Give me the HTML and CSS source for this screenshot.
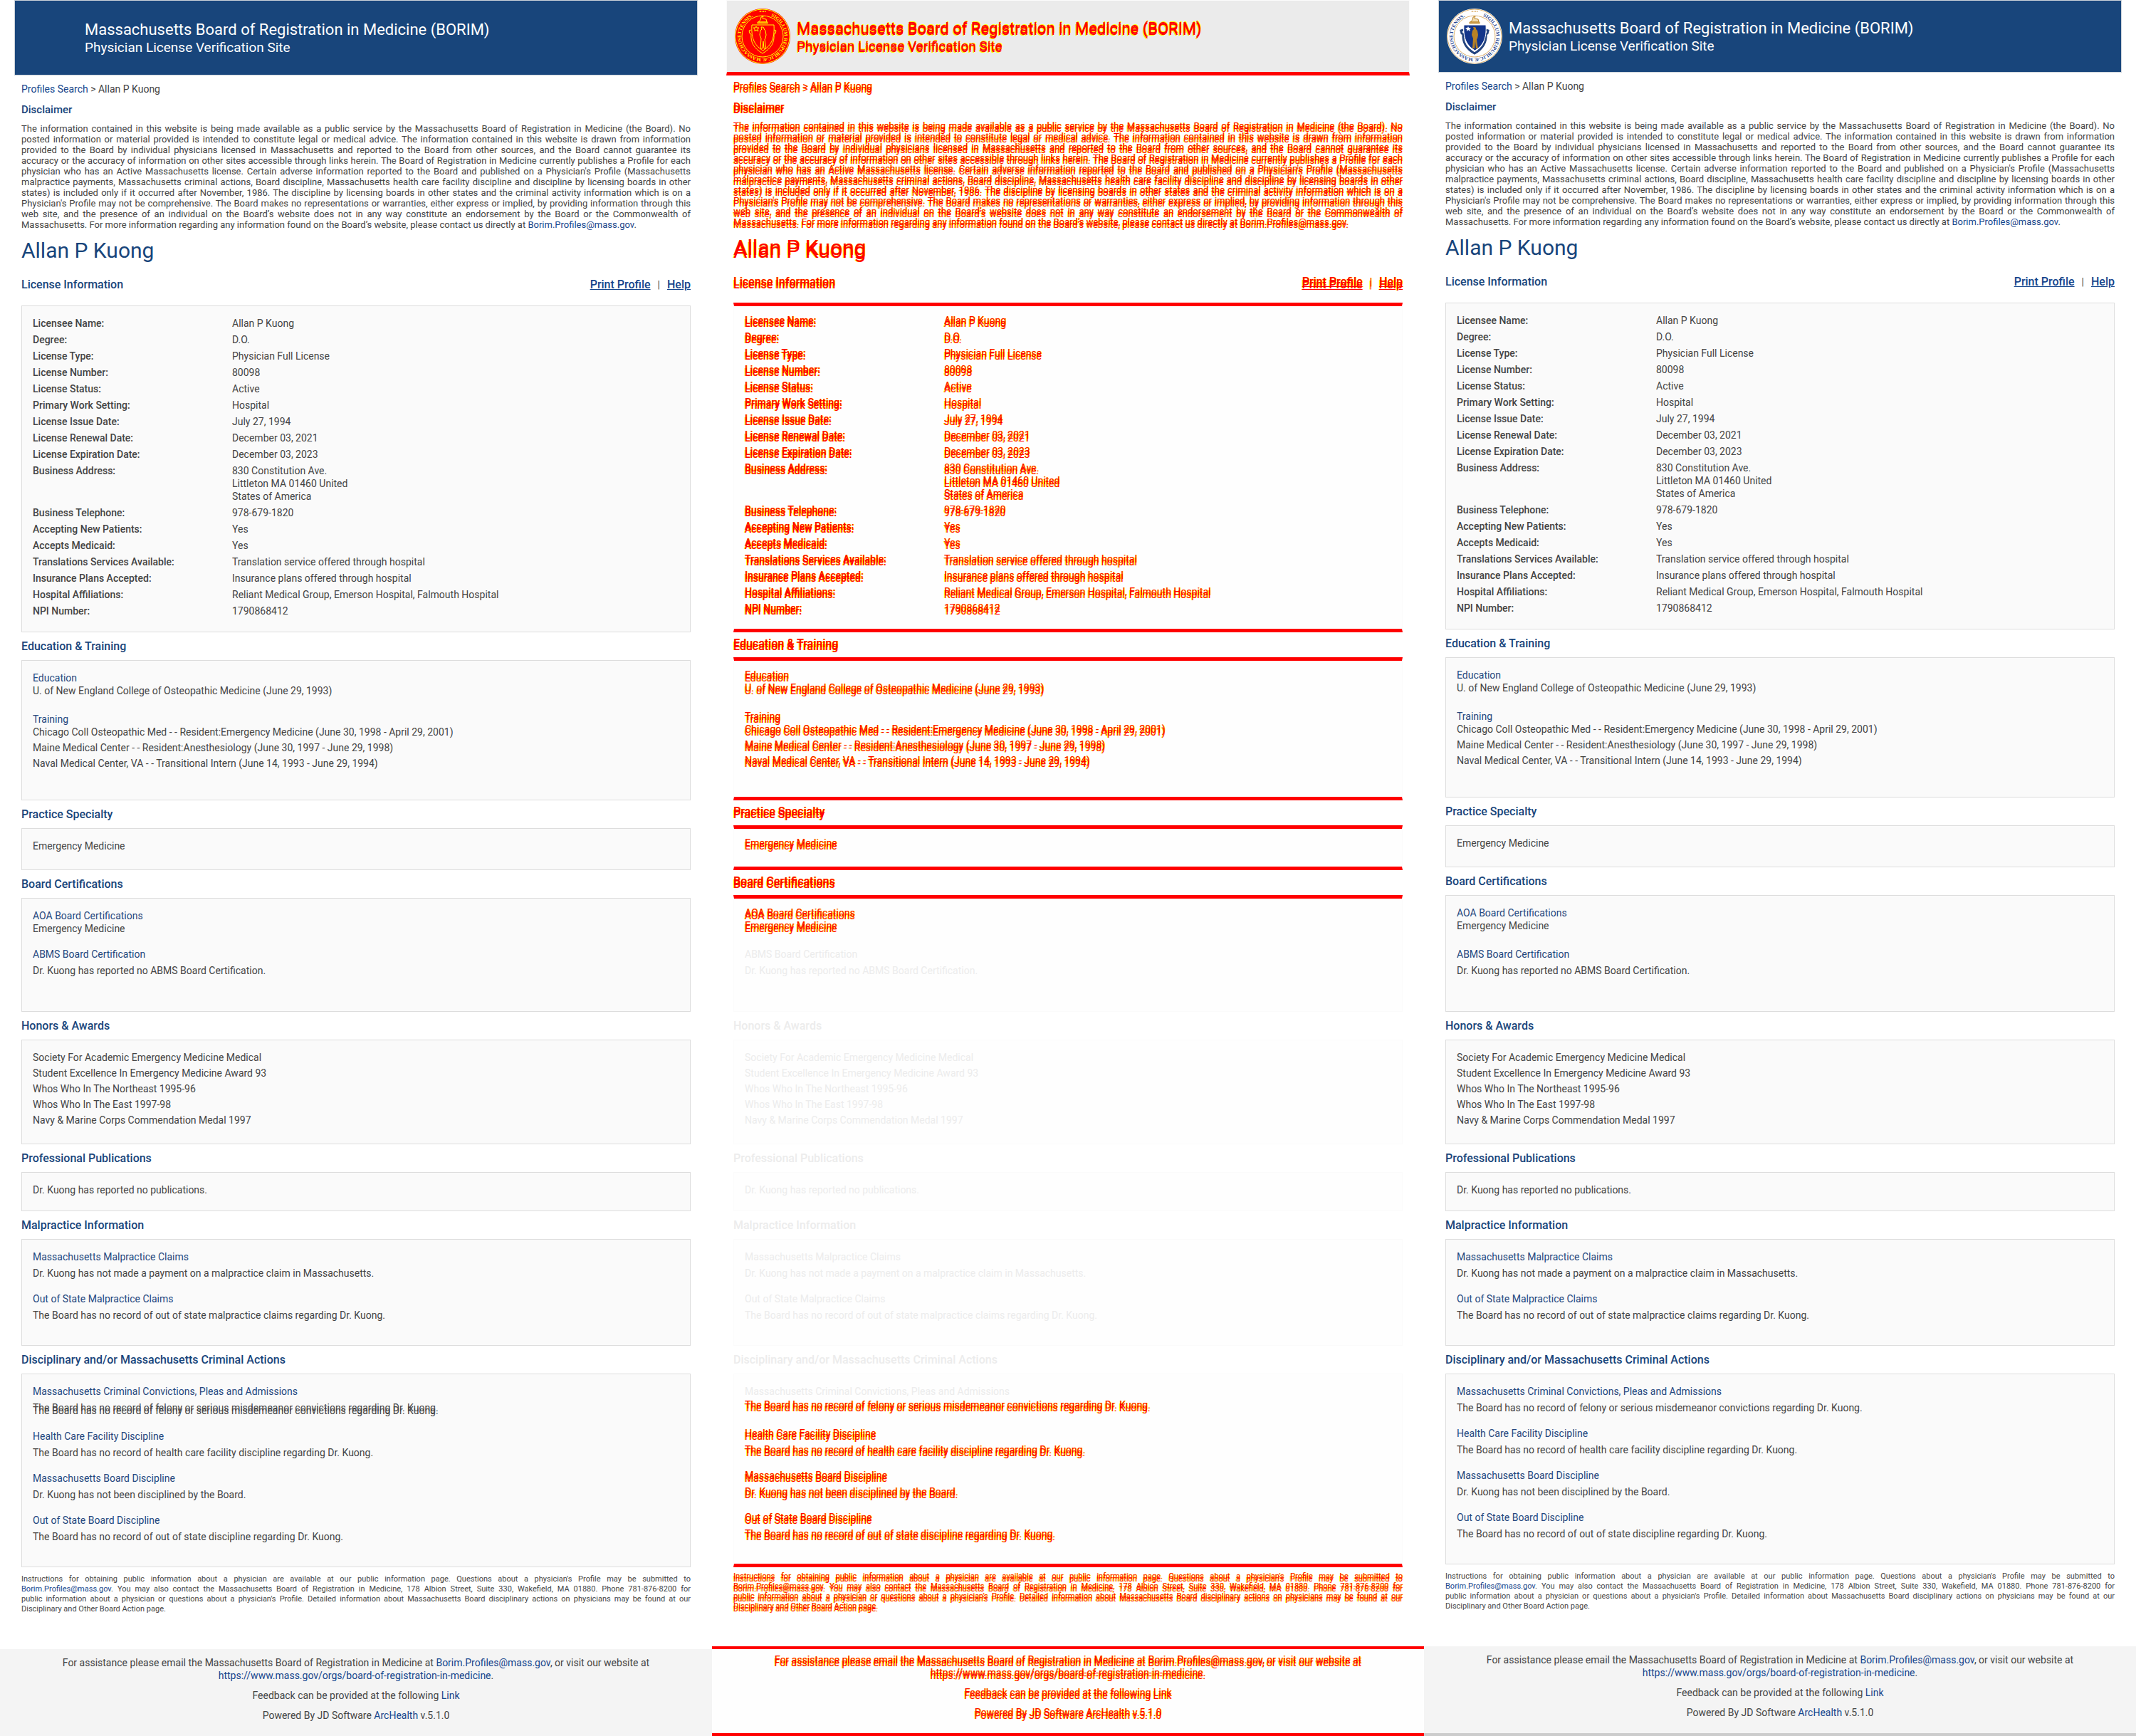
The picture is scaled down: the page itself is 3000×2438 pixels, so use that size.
FILE: index.html
```html
<!DOCTYPE html>
<html lang="en">
<head>
<meta charset="utf-8">
<title>Physician profile comparison</title>
<meta name="viewport" content="width=device-width, initial-scale=1">
<link rel="stylesheet" href="styles.css">
</head>
<body>
<div class="compare">
  <article class="panel before"></article>
  <article class="panel diff"></article>
  <article class="panel after"></article>
</div>

<!-- One profile page; script.js places a copy in each panel. -->
<template id="profile">
  <header class="banner">
    <svg class="seal" viewBox="0 0 80 80" aria-hidden="true">
      <defs><path id="ring" d="M40 9.5a30.500 30.500 0 1 1 -.01 0"/></defs>
      <circle class="seal-disc" cx="40" cy="40" r="39"/>
      <circle class="seal-rim" cx="40" cy="40" r="38"/>
      <circle class="seal-rim" cx="40" cy="40" r="29"/>
      <text class="seal-text"><textPath href="#ring" startOffset="12">SIGILLUM REIPUBLICÆ MASSACHUSETTENSIS.</textPath></text>
      <path class="seal-gold" d="M35 5l2-1 2 1 2-1 2 1 2-1v2l-2-1-2 1-2-1-2 1-2-1z"/>
      <path class="seal-crest" d="M34 20l3-3 1-4 3-1-1 3 5 1 1 4zM33 20h14v2H33z"/>
      <path class="seal-ribbon" d="M24 31l-3 1 1 4 2 1c-1 12 4 20 16 27 12-7 17-15 16-27l2-1 1-4-3-1"/>
      <path class="seal-shield" d="M25 24h31c1 16-2 28-15.500 36C27 52 24 40 25 24z"/>
      <path class="seal-star" d="M31 26l1 2h3l-2 2 1 3-3-2-2 2 0-3-2-2h3z"/>
      <path class="seal-figure" d="M40 27l2 1 0 2 2 2 1 6-1 5-1 1 1 8 1 5h-3l-1-10-1 10h-3l1-14-2-5 1-6 2-2-1-3z"/>
    </svg>
    <div class="banner-text">
      <p class="banner-title">Massachusetts Board of Registration in Medicine (BORIM)</p>
      <p class="banner-sub">Physician License Verification Site</p>
    </div>
  </header>

  <main class="content">
    <nav class="crumbs"><a href="#">Profiles Search</a> &gt; Allan P Kuong</nav>
    <h2 class="disclaimer-title">Disclaimer</h2>
    <p class="disclaimer">The information contained in this website is being made available as a public service by the Massachusetts Board of Registration in Medicine (the Board). No posted information or material provided is intended to constitute legal or medical advice. The information contained in this website is drawn from information provided to the Board by individual physicians licensed in Massachusetts and reported to the Board from other sources, and the Board cannot guarantee its accuracy or the accuracy of information on other sites accessible through links herein. The Board of Registration in Medicine currently publishes a Profile for each physician who has an Active Massachusetts license. Certain adverse information reported to the Board and published on a Physician's Profile (Massachusetts malpractice payments, Massachusetts criminal actions, Board discipline, Massachusetts health care facility discipline and discipline by licensing boards in other states) is included only if it occurred after November, 1986. The discipline by licensing boards in other states and the criminal activity information which is on a Physician's Profile may not be comprehensive. The Board makes no representations or warranties, either express or implied, by providing information through this web site, and the presence of an individual on the Board’s website does not in any way constitute an endorsement by the Board or the Commonwealth of Massachusetts. For more information regarding any information found on the Board’s website, please contact us directly at <a href="#">Borim.Profiles@mass.gov</a>.</p>
    <h1 class="name">Allan P Kuong</h1>

    <div class="license-head">
      <h2>License Information</h2>
      <div class="actions"><a href="#">Print Profile</a><span>|</span><a href="#">Help</a></div>
    </div>
    <section class="box moved-top moved-bottom">
      <table class="facts">
        <tr><th scope="row">Licensee Name:</th><td>Allan P Kuong</td></tr>
        <tr><th scope="row">Degree:</th><td>D.O.</td></tr>
        <tr><th scope="row">License Type:</th><td>Physician Full License</td></tr>
        <tr><th scope="row">License Number:</th><td>80098</td></tr>
        <tr><th scope="row">License Status:</th><td>Active</td></tr>
        <tr><th scope="row">Primary Work Setting:</th><td>Hospital</td></tr>
        <tr><th scope="row">License Issue Date:</th><td>July 27, 1994</td></tr>
        <tr><th scope="row">License Renewal Date:</th><td>December 03, 2021</td></tr>
        <tr><th scope="row">License Expiration Date:</th><td>December 03, 2023</td></tr>
        <tr><th scope="row">Business Address:</th><td>830 Constitution Ave.<br>Littleton MA 01460 United<br>States of America</td></tr>
        <tr><th scope="row">Business Telephone:</th><td>978-679-1820</td></tr>
        <tr><th scope="row">Accepting New Patients:</th><td>Yes</td></tr>
        <tr><th scope="row">Accepts Medicaid:</th><td>Yes</td></tr>
        <tr><th scope="row">Translations Services Available:</th><td>Translation service offered through hospital</td></tr>
        <tr><th scope="row">Insurance Plans Accepted:</th><td>Insurance plans offered through hospital</td></tr>
        <tr><th scope="row">Hospital Affiliations:</th><td>Reliant Medical Group, Emerson Hospital, Falmouth Hospital</td></tr>
        <tr><th scope="row">NPI Number:</th><td>1790868412</td></tr>
      </table>
    </section>

    <h2 class="section-title">Education &amp; Training</h2>
    <section class="box education moved-top moved-bottom">
      <h3>Education</h3>
      <p class="school">U. of New England College of Osteopathic Medicine (June 29, 1993)</p>
      <h3>Training</h3>
      <ul>
        <li>Chicago Coll Osteopathic Med - - Resident:Emergency Medicine (June 30, 1998 - April 29, 2001)</li>
        <li>Maine Medical Center - - Resident:Anesthesiology (June 30, 1997 - June 29, 1998)</li>
        <li>Naval Medical Center, VA - - Transitional Intern (June 14, 1993 - June 29, 1994)</li>
      </ul>
    </section>

    <h2 class="section-title">Practice Specialty</h2>
    <section class="box specialty moved-top moved-bottom"><p>Emergency Medicine</p></section>

    <h2 class="section-title">Board Certifications</h2>
    <section class="box certifications moved-top">
      <h3>AOA Board Certifications</h3>
      <p class="aoa">Emergency Medicine</p>
      <div class="finding same"><h3>ABMS Board Certification</h3><p>Dr. Kuong has reported no ABMS Board Certification.</p></div>
    </section>

    <h2 class="section-title same">Honors &amp; Awards</h2>
    <section class="box honors same">
      <ul>
        <li>Society For Academic Emergency Medicine Medical</li>
        <li>Student Excellence In Emergency Medicine Award 93</li>
        <li>Whos Who In The Northeast 1995-96</li>
        <li>Whos Who In The East 1997-98</li>
        <li>Navy &amp; Marine Corps Commendation Medal 1997</li>
      </ul>
    </section>

    <h2 class="section-title same">Professional Publications</h2>
    <section class="box publications same"><p>Dr. Kuong has reported no publications.</p></section>

    <h2 class="section-title same">Malpractice Information</h2>
    <section class="box same">
      <div class="finding"><h3>Massachusetts Malpractice Claims</h3><p>Dr. Kuong has not made a payment on a malpractice claim in Massachusetts.</p></div>
      <div class="finding"><h3>Out of State Malpractice Claims</h3><p>The Board has no record of out of state malpractice claims regarding Dr. Kuong.</p></div>
    </section>

    <h2 class="section-title same">Disciplinary and/or Massachusetts Criminal Actions</h2>
    <section class="box moved-bottom">
      <div class="finding convictions"><h3 class="same">Massachusetts Criminal Convictions, Pleas and Admissions</h3><p>The Board has no record of felony or serious misdemeanor convictions regarding Dr. Kuong.</p></div>
      <div class="finding"><h3>Health Care Facility Discipline</h3><p>The Board has no record of health care facility discipline regarding Dr. Kuong.</p></div>
      <div class="finding"><h3>Massachusetts Board Discipline</h3><p>Dr. Kuong has not been disciplined by the Board.</p></div>
      <div class="finding"><h3>Out of State Board Discipline</h3><p>The Board has no record of out of state discipline regarding Dr. Kuong.</p></div>
    </section>

    <div class="instructions">
      <p>Instructions for obtaining public information about a physician are available at our public information page. Questions about a physician's Profile may be submitted to<br>
      <a href="#">Borim.Profiles@mass.gov</a>. You may also contact the Massachusetts Board of Registration in Medicine, 178 Albion Street, Suite 330, Wakefield, MA 01880. Phone 781-876-8200 for<br>
      public information about a physician or questions about a physician's Profile. Detailed information about Massachusetts Board disciplinary actions on physicians may be found at our</p>
      <p class="last-line">Disciplinary and Other Board Action page.</p>
    </div>
  </main>

  <footer class="footer">
    <p>For assistance please email the Massachusetts Board of Registration in Medicine at <a href="#">Borim.Profiles@mass.gov</a>, or visit our website at <a href="#">https://www.mass.gov/orgs/board-of-registration-in-medicine</a>.</p>
    <p>Feedback can be provided at the following <a href="#">Link</a></p>
    <p>Powered By JD Software <a href="#">ArcHealth</a> v.5.1.0</p>
  </footer>
</template>
<script src="script.js"></script>
</body>
</html>
```
FILE: styles.css
```css
* {
  box-sizing: border-box;
}

body {
  margin: 0;
  background: #fff;
  color: #444;
  font: 14px/18px Roboto, "Liberation Sans", sans-serif;
}

h1, h2, h3, p, ul {
  margin: 0;
  padding: 0;
  font-size: 14px;
  font-weight: 400;
}

ul {
  list-style: none;
}

a {
  color: #14458c;
  text-decoration: none;
}

.compare {
  display: grid;
  grid-template-columns: repeat(3, minmax(0, 1fr));
}

/* Banner */
.banner {
  display: flex;
  gap: 8px;
  margin: 0 20px;
  padding: 11px 10px;
  height: 106px;
  border: 1px solid #ccd3da;
  background: #18457b;
  color: #fff;
}

.seal {
  flex: none;
  width: 80px;
  height: 80px;
}

.before .seal {
  visibility: hidden;
}

.banner-text {
  padding-top: 17px;
}

.banner-title {
  font-size: 22px;
  line-height: 26px;
}

.banner-sub {
  font-size: 19px;
  line-height: 24px;
}

.seal-disc { fill: #fff; }
.seal-rim { fill: none; stroke: #dcb06c; stroke-width: 1; }
.seal-text { fill: #1d3f8f; font: 700 7px "Liberation Serif", serif; }
.seal-gold { fill: #dcb06c; }
.seal-crest { fill: #f3dcae; stroke: #b98225; stroke-width: 1; }
.seal-ribbon { fill: none; stroke: #23447f; stroke-width: 3; }
.seal-shield { fill: #12358a; stroke: #fff; stroke-width: 1; }
.seal-star { fill: #fff; }
.seal-figure { fill: #b98225; }

/* Page body */
.content {
  padding: 10px 30px 49px;
}

h2 {
  color: #18457b;
  font-size: 16px;
  font-weight: 500;
}

h3 {
  color: #24477e;
}

.disclaimer-title {
  margin: 11px 0 10px;
  font-size: 15px;
}

.disclaimer {
  font-size: 13px;
  line-height: 15px;
  text-align: justify;
}

.name {
  margin: 12px 0 22px;
  color: #18457b;
  font-size: 30px;
  line-height: 34px;
}

.license-head {
  display: flex;
  justify-content: space-between;
  margin-bottom: 20px;
}

.actions {
  display: flex;
  gap: 10px;
}

.actions a {
  font-size: 16px;
  font-weight: 500;
  text-decoration: underline;
}

.section-title {
  margin: 11px 0 10px;
}

.box {
  padding: 15px;
  border: 1px solid #ddd;
  background: #fafafa;
}

.facts {
  width: 100%;
  border-collapse: collapse;
}

.facts th,
.facts td {
  padding: 0 0 5px;
  text-align: left;
  vertical-align: top;
}

.facts th {
  width: 280px;
  font-weight: 500;
}

.box li { margin-bottom: 4px; }
.school { margin-bottom: 22px; }
.education { padding-bottom: 38px; }
.specialty { padding-bottom: 24px; }
.certifications { padding-bottom: 30px; }
.honors,
.publications { padding-bottom: 20px; }
.aoa { margin-bottom: 18px; }

.finding { margin-bottom: 18px; }
.finding p { margin-top: 5px; }

.convictions { margin-bottom: 22px; }

.before .convictions p {
  text-shadow: 0 4px 0 #444;
}

.instructions {
  margin-top: 10px;
}

.instructions p {
  font-size: 11px;
  line-height: 14px;
  text-align: justify;
  text-align-last: justify;
}

.instructions .last-line {
  text-align-last: left;
}

.footer {
  padding: 10px 70px;
  background: #f4f4f4;
  text-align: center;
}

.footer p { margin-bottom: 10px; }

/* After: banner is 4px shorter, the certifications gap absorbs it */
.after .banner {
  height: 102px;
  padding-top: 10px;
}

.after .banner-text { padding-top: 16px; }
.after .aoa { margin-bottom: 22px; }
.after .convictions { margin-bottom: 18px; }
.after { border-bottom: 4px solid #ccc; }

/* Diff: changed pixels in red and yellow, unchanged content faded */
.diff,
.diff a,
.diff h1,
.diff h2,
.diff h3 {
  color: #f00;
}

.diff {
  text-shadow: 0 -4px 0 #f00, -1px 0 0 #ff0, 1px -4px 0 #ff0;
}

.diff .banner {
  padding-top: 10px;
  border: 1px solid #fbfbfb;
  border-bottom: 5px solid #f00;
  background: #ebebeb;
  color: #f00;
  text-shadow: 0 -2px 0 #f00, -1px 1px 0 #ff0, 1px -3px 0 #ff0;
}

.diff .banner-text { padding-top: 18px; }

.diff .box {
  border-color: #fbfbfb;
  background: #fefefe;
}

.diff .moved-top {
  margin-top: -4px;
  border-top: 5px solid #f00;
}

.diff .moved-bottom {
  padding-bottom: 11px;
  border-bottom: 5px solid #f00;
}

.diff .education { padding-bottom: 34px; }
.diff .specialty { padding-bottom: 20px; }

.diff .same,
.diff .same h3 {
  color: #ececec;
  text-shadow: none;
}

.diff .content { padding-bottom: 45px; }

.diff .footer {
  padding-bottom: 6px;
  border-top: 4px solid #f00;
  border-bottom: 4px solid #f00;
  background: #fefefe;
}

.diff .seal-disc { fill: #f00; }
.diff .seal-rim,
.diff .seal-crest,
.diff .seal-ribbon,
.diff .seal-shield,
.diff .seal-star,
.diff .seal-figure {
  fill: #f00;
  stroke: #ff0;
  stroke-width: 1;
}
.diff .seal-text { fill: #ff0; text-shadow: none; }
.diff .seal-gold { fill: #ff0; }
```
FILE: script.js
```js
const profile = document.getElementById('profile');

document.querySelectorAll('.panel').forEach((panel) => {
  panel.append(profile.content.cloneNode(true));
});
```
